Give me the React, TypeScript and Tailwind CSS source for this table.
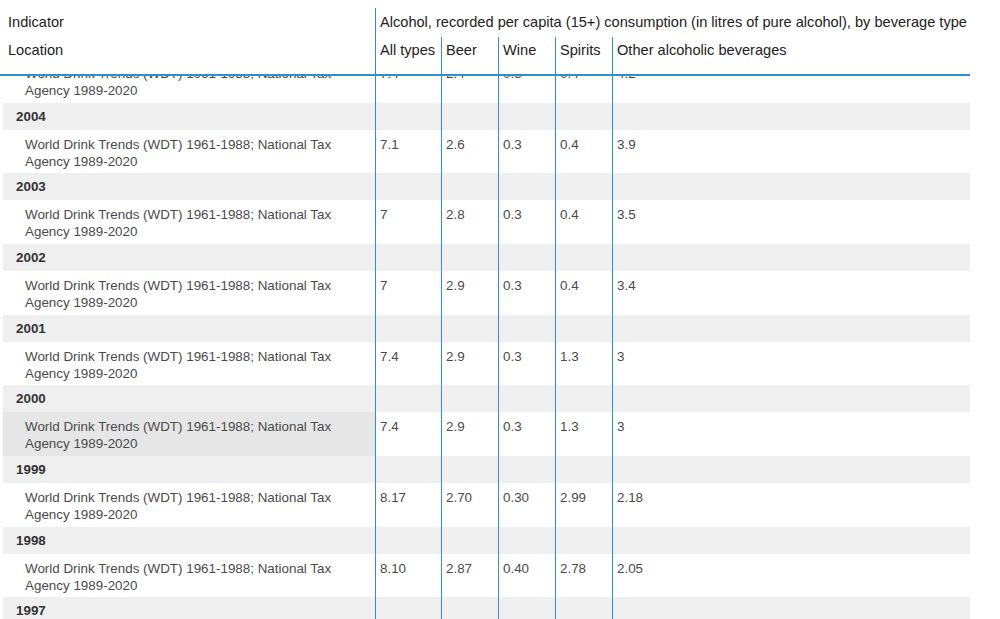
import React from "react";

type Row = { year: string; vals: string[]; hl?: boolean };

const rows: Row[] = [
  { year: "2004", vals: ["7.1", "2.6", "0.3", "0.4", "3.9"] },
  { year: "2003", vals: ["7", "2.8", "0.3", "0.4", "3.5"] },
  { year: "2002", vals: ["7", "2.9", "0.3", "0.4", "3.4"] },
  { year: "2001", vals: ["7.4", "2.9", "0.3", "1.3", "3"] },
  { year: "2000", vals: ["7.4", "2.9", "0.3", "1.3", "3"], hl: true },
  { year: "1999", vals: ["8.17", "2.70", "0.30", "2.99", "2.18"] },
  { year: "1998", vals: ["8.10", "2.87", "0.40", "2.78", "2.05"] },
  { year: "1997", vals: ["7.9", "2.9", "0.4", "2.6", "2.0"] },
];

const SRC = "World Drink Trends (WDT) 1961-1988; National Tax Agency 1989-2020";

function DataRow({ vals, hl }: { vals: string[]; hl?: boolean }) {
  return (
    <div className="grid grid-cols-[372px_66px_57px_57px_57px_358px] h-[43.7px] text-[13.4px] leading-[17px] text-[#4a4a4a]">
      <div className={`pl-[22px] pr-[30px] pt-[6px] ${hl ? "bg-[#e6e6e6]" : ""}`}>{SRC}</div>
      {vals.map((v, i) => (
        <div key={i} className="border-l border-[#2b8fd2] pl-[4px] pt-[6px]">
          {v}
        </div>
      ))}
    </div>
  );
}

function YearRow({ year }: { year: string }) {
  return (
    <div className="grid grid-cols-[372px_66px_57px_57px_57px_358px] h-[27px] bg-[#efefef] text-[13.4px] leading-[17px]">
      <div className="pl-[13px] pt-[5px] font-bold text-[#333]">{year}</div>
      {[0, 1, 2, 3, 4].map((i) => (
        <div key={i} className="border-l border-[#2b8fd2]" />
      ))}
    </div>
  );
}

export default function App() {
  return (
    <div
      className="w-[1000px] h-[619px] overflow-hidden bg-white"
      style={{ fontFamily: '"Liberation Sans", Arial, sans-serif' }}
    >
      <div className="w-[970px]">
        {/* header */}
        <div className="pt-[8px] border-b-2 border-[#2b8fd2] text-[14.6px] leading-[17px] text-[#222] relative z-10 bg-white">
          <div className="grid grid-cols-[375px_595px] h-[29px]">
            <div className="pl-[8px] pt-[6px]">Indicator</div>
            <div className="border-l border-[#2b8fd2] pl-[4px] pt-[6px] whitespace-nowrap">
              Alcohol, recorded per capita (15+) consumption (in litres of pure alcohol), by beverage type
            </div>
          </div>
          <div className="grid grid-cols-[375px_66px_57px_57px_57px_358px] h-[37px]">
            <div className="pl-[8px] pt-[5px]">Location</div>
            <div className="border-l border-[#2b8fd2] pl-[4px] pt-[5px] whitespace-nowrap">All types</div>
            <div className="border-l border-[#2b8fd2] pl-[4px] pt-[5px]">Beer</div>
            <div className="border-l border-[#2b8fd2] pl-[4px] pt-[5px]">Wine</div>
            <div className="border-l border-[#2b8fd2] pl-[4px] pt-[5px]">Spirits</div>
            <div className="border-l border-[#2b8fd2] pl-[4px] pt-[5px] whitespace-nowrap">Other alcoholic beverages</div>
          </div>
        </div>
        {/* body */}
        <div className="h-[543px] overflow-hidden">
          <div className="ml-[3px] -mt-[17.2px]">
            <DataRow vals={["7.4", "2.4", "0.3", "0.4", "4.2"]} />
            {rows.map((r) => (
              <React.Fragment key={r.year}>
                <YearRow year={r.year} />
                <DataRow vals={r.vals} hl={r.hl} />
              </React.Fragment>
            ))}
          </div>
        </div>
      </div>
    </div>
  );
}
